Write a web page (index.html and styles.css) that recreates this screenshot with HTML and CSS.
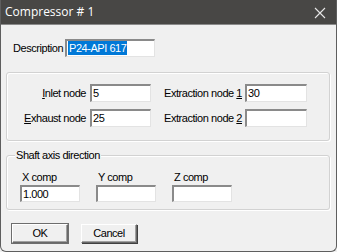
FILE: index.html
```html
<!DOCTYPE html>
<html>
<head>
<meta charset="utf-8">
<link rel="stylesheet" href="styles.css">
</head>
<body>
<div class="window">
  <div class="titlebar">
    <span class="title">Compressor # 1</span>
    <svg class="close" width="12" height="12" viewBox="0 0 12 12"><path d="M1 1 L11 11 M11 1 L1 11" stroke="#e6e6e6" stroke-width="1.1" fill="none"/></svg>
  </div>
  <div class="content">
    <div class="desc-row">
      <span class="desc-label">Description</span>
      <div class="field desc-field"><span class="hl">P24-API 617</span></div>
    </div>
    <div class="group g1">
      <span class="lbl right"><u>I</u>nlet node</span>
      <div class="field">5</div>
      <span class="lbl right2">Extraction node <u>1</u></span>
      <div class="field">30</div>
      <span class="lbl right"><u>E</u>xhaust node</span>
      <div class="field">25</div>
      <span class="lbl right2">Extraction node <u>2</u></span>
      <div class="field"></div>
    </div>
    <div class="group g2">
      <span class="legend">Shaft axis direction</span>
      <div class="comps">
        <div class="comp"><span class="clbl">X comp</span><div class="field cfield">1.000</div></div>
        <div class="comp"><span class="clbl">Y comp</span><div class="field cfield"></div></div>
        <div class="comp"><span class="clbl">Z comp</span><div class="field cfield"></div></div>
      </div>
    </div>
    <div class="buttons">
      <div class="btn default">OK</div>
      <div class="btn">Cancel</div>
    </div>
  </div>
</div>
</body>
</html>
```
FILE: styles.css
```css
* { box-sizing: border-box; }
html, body { margin: 0; padding: 0; background: #f0f0f0; }
body { font-family: "Liberation Sans", Arial, sans-serif; font-size: 11px; letter-spacing: -0.45px; color: #000; }
.window {
  width: 337px; height: 252px;
  border: 1px solid #5e5e5e;
  border-top: 0;
  border-radius: 0 0 6px 6px;
  background: #f0f0f0;
  overflow: hidden;
}
.titlebar {
  height: 25px;
  background: #484745;
  border-bottom: 1px solid #8a8a8a;
  display: flex; align-items: center; justify-content: space-between;
  padding: 0 10px 0 4px;
}
.title { color: #fff; font-family: "Open Sans", "Noto Sans", sans-serif; font-size: 12px; letter-spacing: 0; padding-bottom: 1px; }
.close { margin-top: 1px; }
.content { padding: 0; }
.desc-row { display: flex; align-items: center; margin: 14px 0 0 12px; height: 18px; }
.desc-label { width: 52px; }
.field {
  background: #fff;
  border-top: 2px solid #8a8a8a;
  border-left: 2px solid #8a8a8a;
  border-right: 1px solid #e3e3e3;
  border-bottom: 1px solid #e3e3e3;
  height: 18px; line-height: 15px;
  padding-left: 1px;
  white-space: nowrap;
}
.desc-field { width: 90px; }
.hl { background: #0078d7; color: #fff; padding: 0 1px; display: inline-block; line-height: 14px; }
.group {
  margin-left: 5px; width: 324px;
  border: 1px solid #d2d2d2;
  border-radius: 3px;
  box-shadow: inset 1px 1px 0 #fff, 1px 1px 0 #fff;
}
.g1 {
  margin-top: 15px; height: 69px;
  display: grid;
  grid-template-columns: 83px 61px 94px 62px;
  grid-template-rows: 18px 18px;
  row-gap: 7px;
  align-items: center;
  padding: 11px 0 0 0;
}
.lbl { white-space: nowrap; }
.right { text-align: right; padding-right: 4px; }
.right2 { text-align: right; padding-right: 3px; }
.g2 { margin-top: 14px; height: 55px; padding: 0 0 0 13px; }
.legend { display: inline-block; background: #f0f0f0; margin: -7px 0 0 -5px; padding: 0 1px; line-height: 13px; vertical-align: top; }
.comps { display: flex; gap: 16px; margin-top: 3px; }
.comp { display: flex; flex-direction: column; }
.clbl { padding-left: 2px; line-height: 13px; height: 13px; margin-bottom: 1px; }
.cfield { width: 60px; height: 17px; }
.buttons { display: flex; gap: 13px; margin: 14px 0 0 11px; }
.btn {
  width: 56px; height: 19px;
  border-top: 1px solid #fff; border-left: 1px solid #fff;
  border-right: 1px solid #696969; border-bottom: 1px solid #696969;
  box-shadow: inset -1px -1px 0 #a0a0a0, 1px 1px 0 #404040;
  display: flex; align-items: center; justify-content: center;
  padding-bottom: 1px;
}
.btn.default { outline: 1px solid #6d6d6d; }
```
